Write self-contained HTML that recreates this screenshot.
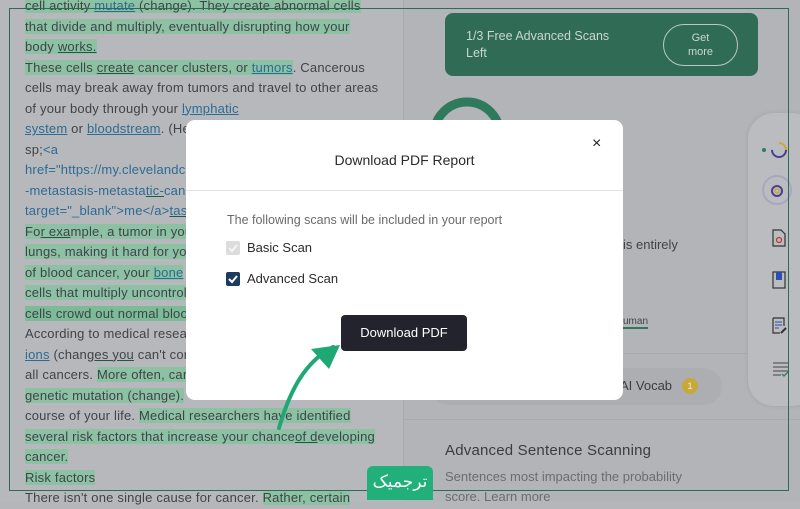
<!DOCTYPE html>
<html><head><meta charset="utf-8"><style>
*{margin:0;padding:0;box-sizing:border-box}
html{background:#b5b6b9}
body{width:800px;height:500px;overflow:hidden;position:relative;font-family:"Liberation Sans",Arial,sans-serif}
.t{position:absolute;width:101px;height:101px}
.L{background:#b7b8bb}.R{background:#b3b4b7}
.txt{position:absolute;left:25px;top:-4px;font-size:13px;line-height:20.5px;color:#3f4448;white-space:nowrap;letter-spacing:0.2px}
.h{background:#8dc1a4}
.l{color:#2c6b95;text-decoration:underline}
.u{text-decoration:underline;text-decoration-color:#1d5b40}
.frame{position:absolute;left:9px;top:8px;width:780px;height:483px;border:1px solid #2f6a55}
.banner{position:absolute;left:445px;top:13px;width:313px;height:63px;background:#2f6b55;border-radius:8px;color:#c9d7d0;font-size:12.5px;line-height:17px;padding:15px 0 0 21px}
.pill{position:absolute;left:218px;top:11px;width:75px;height:42px;border:1px solid #b8cac1;border-radius:21px;text-align:center;font-size:11px;line-height:14px;padding-top:6px}
.side{position:absolute;left:748px;top:113px;width:70px;height:293px;background:#bbbcbf;border-radius:26px;box-shadow:0 0 5px rgba(0,0,0,.1)}
.modal{position:absolute;left:186px;top:120px;width:437px;height:280px;background:#fff;border-radius:9px}
.cb{position:absolute;width:14px;height:14px;border-radius:2px}
</style></head><body>
<div class="t L" style="left:0;top:0"></div><div class="t L" style="left:100px;top:0"></div><div class="t L" style="left:200px;top:0"></div><div class="t L" style="left:300px;top:0;width:103px"></div>
<div class="t L" style="left:0;top:100px"></div><div class="t L" style="left:100px;top:100px"></div><div class="t L" style="left:200px;top:100px"></div><div class="t L" style="left:300px;top:100px;width:103px"></div>
<div class="t L" style="left:0;top:200px"></div><div class="t L" style="left:100px;top:200px"></div><div class="t L" style="left:200px;top:200px"></div><div class="t L" style="left:300px;top:200px;width:103px"></div>
<div class="t L" style="left:0;top:300px"></div><div class="t L" style="left:100px;top:300px"></div><div class="t L" style="left:200px;top:300px"></div><div class="t L" style="left:300px;top:300px;width:103px"></div>
<div class="t L" style="left:0;top:400px"></div><div class="t L" style="left:100px;top:400px"></div><div class="t L" style="left:200px;top:400px"></div><div class="t L" style="left:300px;top:400px;width:103px"></div>
<div class="t R" style="left:403px;top:0"></div><div class="t R" style="left:503px;top:0"></div><div class="t R" style="left:603px;top:0"></div><div class="t R" style="left:703px;top:0;width:97px"></div>
<div class="t R" style="left:403px;top:100px"></div><div class="t R" style="left:503px;top:100px"></div><div class="t R" style="left:603px;top:100px"></div><div class="t R" style="left:703px;top:100px;width:97px"></div>
<div class="t R" style="left:403px;top:200px"></div><div class="t R" style="left:503px;top:200px"></div><div class="t R" style="left:603px;top:200px"></div><div class="t R" style="left:703px;top:200px;width:97px"></div>
<div class="t R" style="left:403px;top:300px"></div><div class="t R" style="left:503px;top:300px"></div><div class="t R" style="left:603px;top:300px"></div><div class="t R" style="left:703px;top:300px;width:97px"></div>
<div class="t R" style="left:403px;top:400px"></div><div class="t R" style="left:503px;top:400px"></div><div class="t R" style="left:603px;top:400px"></div><div class="t R" style="left:703px;top:400px;width:97px"></div>
<div style="position:absolute;left:403px;top:0;width:1px;height:500px;background:#a9aaad"></div>
<div class="txt">
<span class="h">cell activity <span class="l">mutate</span> (change). They create abnormal cells</span><br>
<span class="h">that divide and multiply, eventually disrupting how your</span><br>
<span class="h">body <span class="u">works.</span></span><br>
<span class="h">These cells <span class="u">create</span> cancer clusters, or <span class="l">tumors</span></span>. Cancerous<br>
cells may break away from tumors and travel to other areas<br>
of your body through your <span class="l">lymphatic </span><br>
<span class="l">system</span> or <span class="l">bloodstream</span>. (Here's how<br>
sp;<span style="color:#2c6b95">&lt;a</span><br>
<span style="color:#2c6b95">href="https://my.clevelandclinic</span><br>
<span style="color:#2c6b95">-metastasis-metasta<span class="u">tic-</span>cancer</span><br>
<span style="color:#2c6b95">target="_blank"&gt;me&lt;/a&gt;<span class="u">tas</span></span><br>
<span class="h">Fo<span class="u">r exa</span>mple, a tumor in your</span><br>
<span class="h">lungs, making it hard for you</span><br>
<span class="h">of blood cancer, your <span class="l">bone</span></span><br>
<span class="h">cells that multiply uncontrolla</span><br>
<span class="h" style="background:#7cbb98">cells crowd out normal blood</span><br>
According to medical research<br>
<span class="l">ions</span> (chang<span class="u">es you</span> can't control<br>
all cancers. <span class="h">More often, cancer</span><br>
<span class="h">genetic mutation (change).</span><br>
course of your life. <span class="h">Medical researchers have identified</span><br>
<span class="h">several risk factors that increase your chance<span class="u">of d</span>eveloping</span><br>
<span class="h">cancer.</span><br>
<span class="h">Risk factors</span><br>
There isn't one single cause for cancer. <span class="h">Rather, certain</span>
</div>
<div class="banner">1/3 Free Advanced Scans<br>Left<div class="pill">Get<br>more</div></div>
<svg style="position:absolute;left:425px;top:93px" width="80" height="80"><circle cx="42" cy="42" r="33" fill="none" stroke="#2f7a5c" stroke-width="9"/></svg>
<div style="position:absolute;left:623px;top:237px;font-size:13px;color:#3f4448">is entirely</div>
<div style="position:absolute;left:623px;top:316px;font-size:10px;color:#3f4448;border-bottom:2px solid #2f7a5c">uman</div>
<div style="position:absolute;left:403px;top:353px;width:345px;height:1px;background:#aaabae"></div>
<div style="position:absolute;left:430px;top:368px;width:292px;height:37px;background:#adaeb1;border-radius:19px"></div>
<div style="position:absolute;left:620px;top:378px;font-size:13px;color:#3a3d40">AI Vocab</div>
<div style="position:absolute;left:682px;top:378px;width:16px;height:16px;border-radius:50%;background:#c9a83a;color:#eee;font-size:9px;text-align:center;line-height:16px">1</div>
<div style="position:absolute;left:403px;top:419px;width:397px;height:1px;background:#aaabae"></div>
<div style="position:absolute;left:445px;top:442px;font-size:15px;color:#3a3d40;letter-spacing:.2px">Advanced Sentence Scanning</div>
<div style="position:absolute;left:445px;top:467px;font-size:13px;color:#6a6d70;line-height:20px">Sentences most impacting the probability<br>score. Learn more</div>
<div class="side">
<svg style="position:absolute;left:12px;top:26px" width="30" height="24"><circle cx="4" cy="11" r="2" fill="#2f7a5c"/><circle cx="19" cy="11" r="7" fill="none" stroke="#4b3f8f" stroke-width="2" stroke-dasharray="22 22"/><path d="M19 4a7 7 0 0 1 7 7" fill="none" stroke="#c9a83a" stroke-width="2"/></svg>
<div style="position:absolute;left:14px;top:62px;width:30px;height:30px;border-radius:50%;border:2px solid #a9a5c4"></div>
<svg style="position:absolute;left:22px;top:71px" width="14" height="14"><circle cx="7" cy="7" r="5" fill="none" stroke="#4b3f8f" stroke-width="2"/><circle cx="7" cy="7" r="2" fill="none" stroke="#c9a83a" stroke-width="1.5"/></svg>
<svg style="position:absolute;left:24px;top:116px" width="14" height="18"><path d="M1 1h8l4 4v12H1z" fill="none" stroke="#333" stroke-width="1.2"/><circle cx="7" cy="11" r="2.5" fill="none" stroke="#c0392b" stroke-width="1.3"/></svg>
<svg style="position:absolute;left:24px;top:158px" width="14" height="18"><rect x="1" y="1" width="12" height="16" fill="none" stroke="#333" stroke-width="1.2"/><rect x="4" y="1" width="6" height="8" fill="#2d4fb0"/></svg>
<svg style="position:absolute;left:24px;top:204px" width="16" height="18"><path d="M1 1h11v8M1 1v15h7" fill="none" stroke="#333" stroke-width="1.2"/><path d="M3 5h7M3 8h7M3 11h4" stroke="#2d4fb0"/><path d="M9 16l5-5" stroke="#333" stroke-width="2"/></svg>
<svg style="position:absolute;left:24px;top:248px" width="18" height="16"><path d="M1 2h15M1 6h15M1 10h15M1 14h8" stroke="#444"/><path d="M10 13l2 2 4-4" fill="none" stroke="#2f7a5c" stroke-width="1.3"/></svg>
</div>
<div class="frame"></div>
<div class="modal">
<div style="position:absolute;left:0;width:100%;top:32px;text-align:center;font-size:14px;color:#2b2b2b">Download PDF Report</div>
<div style="position:absolute;left:406px;top:15px;font-size:16px;color:#222">×</div>
<div style="position:absolute;left:0;top:70px;width:100%;height:1px;background:#e4e4e4"></div>
<div style="position:absolute;left:41px;top:93px;font-size:12.5px;color:#6a6a6a">The following scans will be included in your report</div>
<div class="cb" style="left:40px;top:121px;background:#dcdcdc"><svg width="14" height="14"><path d="M3 7l3 3 5-6" fill="none" stroke="#f4f4f4" stroke-width="2"/></svg></div>
<div style="position:absolute;left:61px;top:120px;font-size:13px;color:#2b2b2b">Basic Scan</div>
<div class="cb" style="left:40px;top:152px;background:#1d3b5e"><svg width="14" height="14"><path d="M3 7l3 3 5-6" fill="none" stroke="#fff" stroke-width="2"/></svg></div>
<div style="position:absolute;left:61px;top:151px;font-size:13px;color:#2b2b2b">Advanced Scan</div>
<div style="position:absolute;left:155px;top:195px;width:126px;height:36px;background:#23232d;border-radius:4px;color:#fff;font-size:13px;text-align:center;line-height:36px">Download PDF</div>
</div>
<svg style="position:absolute;left:0;top:0" width="800" height="500"><path d="M279 428C290 390 305 362 333 347" fill="none" stroke="#20a874" stroke-width="4" stroke-linecap="round"/><path d="M311 349L340 345L329 369Z" fill="#20a874"/></svg>
<div style="position:absolute;left:367px;top:466px;width:66px;height:34px;background:#22b07a;border-radius:6px 6px 0 0;color:#fff;font-size:17px;text-align:center;line-height:32px;font-family:'DejaVu Sans',sans-serif">ترجمیک</div>
</body></html>
